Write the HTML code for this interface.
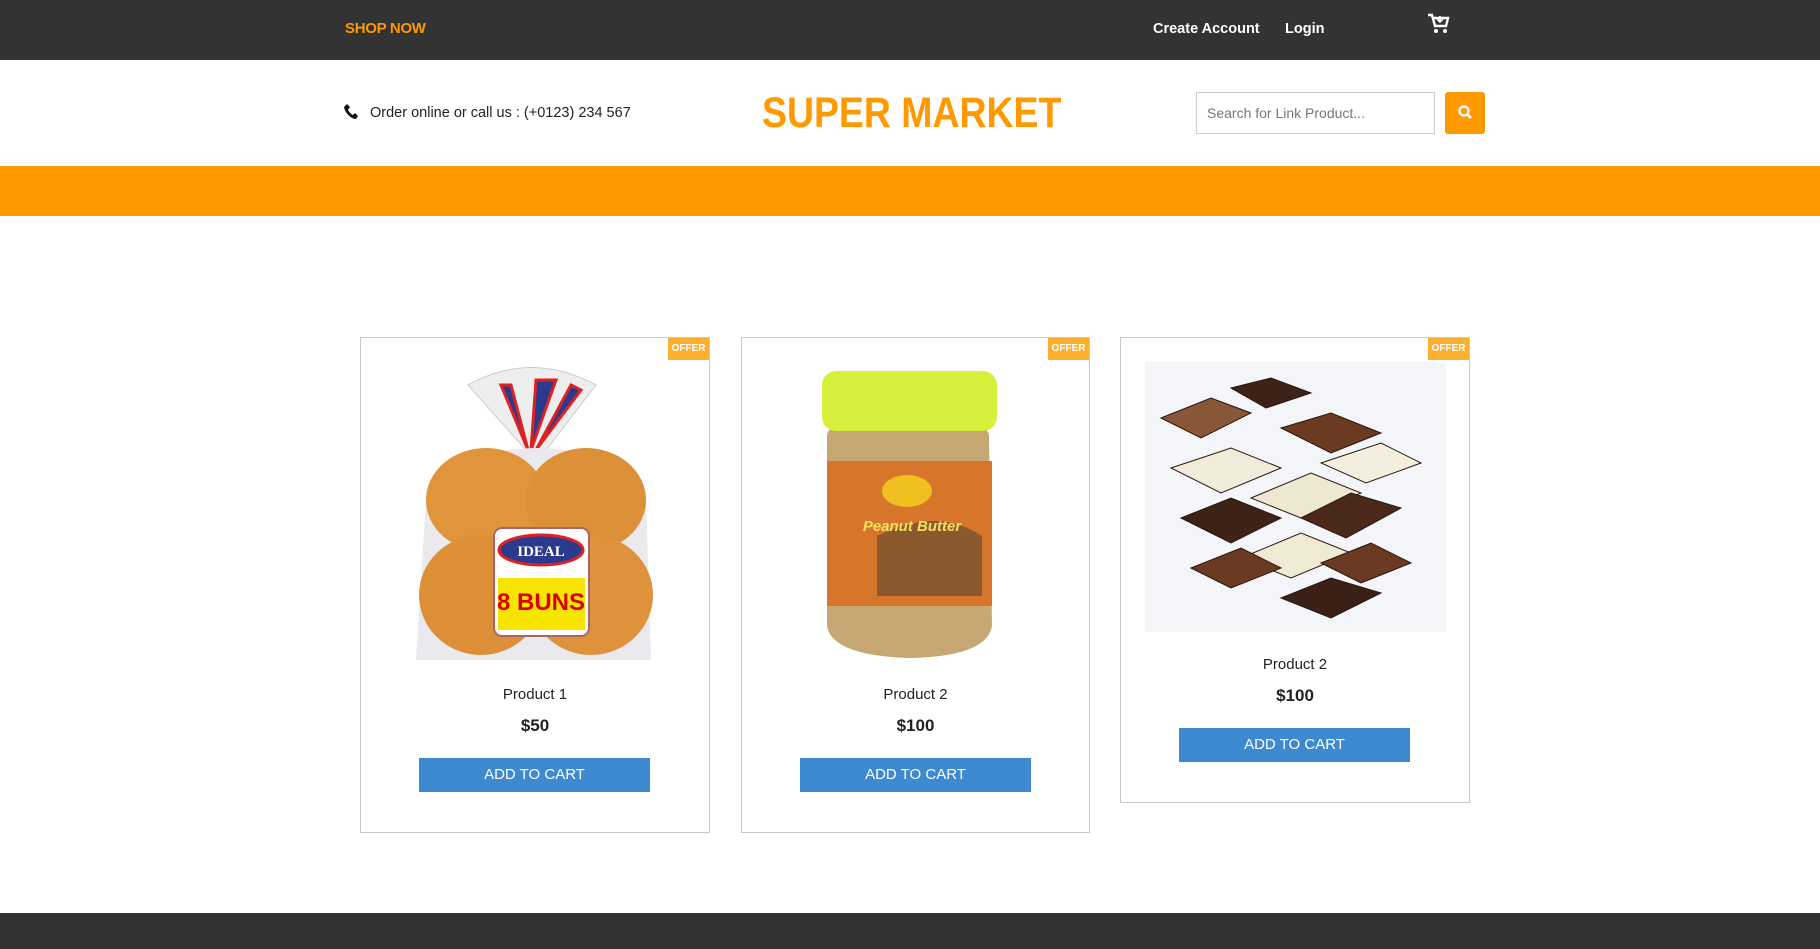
<!DOCTYPE html>
<html><head><meta charset="utf-8"><style>
*{margin:0;padding:0;box-sizing:border-box}
body{width:1820px;height:949px;background:#fff;font-family:"Liberation Sans",sans-serif;position:relative;overflow:hidden}
.a{position:absolute}
.top{left:0;top:0;width:1820px;height:60px;background:#333}
.band{left:0;top:166px;width:1820px;height:50px;background:#fe9900}
.foot{left:0;top:913px;width:1820px;height:36px;background:#333}
.card{border:1px solid #c8c8c8;background:#fff}
.offer{background:#fcb02d;color:#fff;font-size:10px;font-weight:bold;text-align:center;line-height:22px;width:41px;height:22px}
.t{width:100%;text-align:center;color:#222}
.btn{background:#3e8ad0;color:#fff;font-size:15px;text-align:center;line-height:34px;width:231px;height:34px}
</style></head><body>
<div class="a top"></div>
<div class="a" style="left:345px;top:20px;color:#fe9900;font-weight:bold;font-size:15px;letter-spacing:-0.3px">SHOP NOW</div>
<div class="a" style="left:1153px;top:21px;color:#fff;font-weight:bold;font-size:14.5px">Create Account</div>
<div class="a" style="left:1285px;top:21px;color:#fff;font-weight:bold;font-size:14.5px">Login</div>
<svg class="a" style="left:1427px;top:13px" width="24" height="22" viewBox="0 0 24 22"><path d="M1 2h4l3 11h11l2-8H7" fill="none" stroke="#fff" stroke-width="2.4"/><circle cx="9" cy="18" r="2" fill="#fff"/><circle cx="18" cy="18" r="2" fill="#fff"/><path d="M13 3v6M10 6l3 3 3-3" stroke="#fff" stroke-width="1.6" fill="none"/></svg>

<svg class="a" style="left:344px;top:103px" width="16" height="17" viewBox="0 0 16 17"><path d="M3 1l3 3-2 3c1 2 3 4 5 5l2-2 3 3-2 3C7 16 1 10 0 4z" fill="#111"/></svg>
<div class="a" style="left:370px;top:105px;font-size:14.5px;color:#222">Order online or call us : (+0123) 234 567</div>
<div class="a" style="left:762px;top:89px;font-size:43px;font-weight:bold;color:#fe9900;transform:scaleX(0.87);transform-origin:0 0">SUPER MARKET</div>
<div class="a" style="left:1196px;top:92px;width:239px;height:42px;border:1px solid #ccc;font-size:14px;color:#777;padding:12px 0 0 10px">Search for Link Product...</div>
<div class="a" style="left:1445px;top:92px;width:40px;height:42px;background:#fe9900;border-radius:3px"></div>
<svg class="a" style="left:1457px;top:104px" width="16" height="17" viewBox="0 0 16 17"><circle cx="7" cy="7" r="4.5" fill="none" stroke="#fff" stroke-width="2.4"/><path d="M10 10l4 4" stroke="#fff" stroke-width="2.8"/></svg>
<div class="a band"></div>

<!-- card 1 -->
<div class="a card" style="left:360px;top:337px;width:350px;height:496px">
<div class="a offer" style="right:0;top:0">OFFER</div>
<svg class="a" style="left:55px;top:22px" width="240" height="305" viewBox="0 0 240 305">
<path d="M52 25 Q115 -10 180 25 L130 90 L110 90z" fill="#eee" stroke="#ccc"/>
<path d="M85 25 L112 90 L95 25z M120 20 L115 90 L140 20z M155 25 L120 90 L165 30z" fill="#2a3a8f" stroke="#d22" stroke-width="3"/>
<path d="M10 140 Q30 90 120 88 Q210 90 230 140 L235 300 L0 300z" fill="#e9e9ee"/>
<ellipse cx="70" cy="140" rx="60" ry="52" fill="#e0953d"/><ellipse cx="170" cy="140" rx="60" ry="52" fill="#dc9038"/>
<ellipse cx="65" cy="235" rx="62" ry="60" fill="#dd8f37"/><ellipse cx="175" cy="235" rx="62" ry="60" fill="#de923b"/>
<rect x="78" y="168" width="95" height="108" rx="8" fill="#fff" stroke="#a66" stroke-width="2"/>
<ellipse cx="125" cy="190" rx="42" ry="15" fill="#2a3a8f" stroke="#d22" stroke-width="3"/>
<text x="125" y="196" text-anchor="middle" font-size="15" font-weight="bold" fill="#fff" font-family="Liberation Serif">IDEAL</text>
<rect x="82" y="218" width="87" height="52" fill="#f7e400"/>
<text x="125" y="250" text-anchor="middle" font-size="24" font-weight="bold" fill="#d00">8 BUNS</text>
</svg>
<div class="a t" style="top:348px;font-size:15px">Product 1</div>
<div class="a t" style="top:378px;font-size:17px;font-weight:bold">$50</div>
<div class="a btn" style="left:58px;top:420px">ADD TO CART</div>
</div>

<!-- card 2 -->
<div class="a card" style="left:741px;top:337px;width:349px;height:496px">
<div class="a offer" style="right:0;top:0">OFFER</div>
<svg class="a" style="left:75px;top:28px" width="190" height="295" viewBox="0 0 190 295">
<path d="M10 70 Q10 60 30 58 L150 58 Q172 60 172 70 L175 260 Q170 290 95 292 Q15 290 10 260z" fill="#c7a774"/>
<path d="M10 95 L175 95 L175 240 L10 240z" fill="#d7762a"/>
<path d="M60 170 Q120 140 165 170 L165 230 L60 230z" fill="#8a5a2e"/>
<ellipse cx="90" cy="125" rx="25" ry="16" fill="#f0c020"/>
<text x="95" y="165" text-anchor="middle" font-size="15" font-style="italic" font-weight="bold" fill="#f5e060">Peanut Butter</text>
<rect x="5" y="5" width="175" height="60" rx="14" fill="#d6f03c"/>
</svg>
<div class="a t" style="top:348px;font-size:15px">Product 2</div>
<div class="a t" style="top:378px;font-size:17px;font-weight:bold">$100</div>
<div class="a btn" style="left:58px;top:420px">ADD TO CART</div>
</div>

<!-- card 3 -->
<div class="a card" style="left:1120px;top:337px;width:350px;height:466px">
<div class="a offer" style="right:0;top:0">OFFER</div>
<div class="a" style="left:24px;top:24px;width:301px;height:270px;background:#f4f5f8"></div>
<svg class="a" style="left:30px;top:30px" width="290" height="260" viewBox="0 0 290 260">
<g stroke="#2a1610" stroke-width="1">
<path d="M10 50 L60 30 L100 45 L50 70z" fill="#8a5638"/><path d="M80 20 L120 10 L160 25 L115 40z" fill="#3d2218"/>
<path d="M130 60 L180 45 L230 65 L180 85z" fill="#6b3a22"/><path d="M20 100 L80 80 L130 100 L70 125z" fill="#f1ecd9"/>
<path d="M100 130 L160 105 L210 125 L150 150z" fill="#eee8d2"/><path d="M170 95 L230 75 L270 95 L215 115z" fill="#f3eedd"/>
<path d="M150 150 L200 125 L250 140 L195 170z" fill="#4a281a"/><path d="M30 150 L80 130 L130 150 L80 175z" fill="#3d2218"/>
<path d="M90 190 L150 165 L200 185 L140 210z" fill="#f0ead5"/><path d="M170 195 L220 175 L260 195 L210 215z" fill="#6a3a22"/>
<path d="M130 230 L180 210 L230 225 L180 250z" fill="#3a2015"/><path d="M40 200 L90 180 L130 200 L80 220z" fill="#6b3a22"/>
</g></svg>
<div class="a t" style="top:318px;font-size:15px">Product 2</div>
<div class="a t" style="top:348px;font-size:17px;font-weight:bold">$100</div>
<div class="a btn" style="left:58px;top:390px">ADD TO CART</div>
</div>

<div class="a foot"></div>
</body></html>
